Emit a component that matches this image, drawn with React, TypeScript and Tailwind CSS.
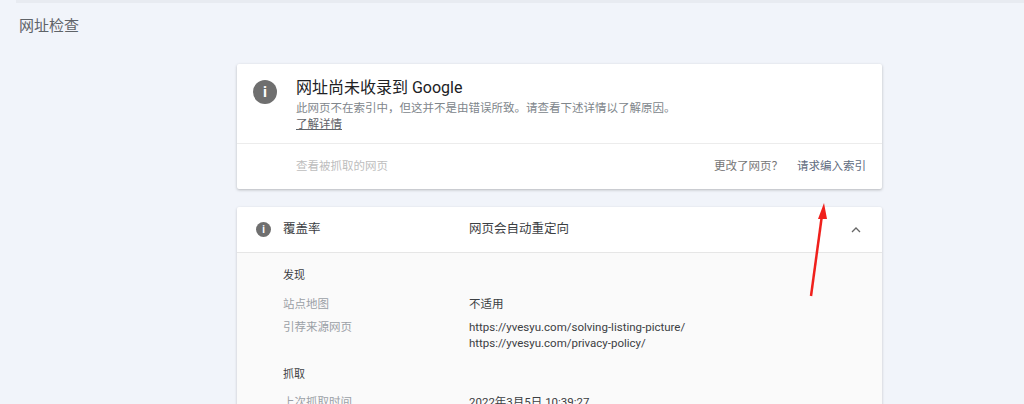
export default function App() {
  const f = { fontFamily: 'Roboto, "Noto Sans CJK SC", sans-serif' };
  return (
    <div style={f} className="relative w-[1024px] h-[404px] overflow-hidden bg-[#f1f4fa]">
      <div className="ml-4 h-[3px] bg-[#e8ebf1]" />
      <div className="pl-[19px] pt-[13px] text-[15px] text-[#5f6368] leading-[20px]">网址检查</div>
      <div className="ml-[237px] w-[645px] mt-[28px]">
        <div className="bg-white rounded-[2px] shadow-[0_1px_3px_rgba(0,0,0,0.25)]">
          <div className="flex pl-[16px] pt-[14px] h-[79px]">
            <div className="w-[24px] h-[24px] mt-[2px] rounded-full bg-[#6f6f6f] text-white flex items-center justify-center text-[15px] font-bold">i</div>
            <div className="ml-[19px]">
              <div className="text-[16px] text-[#202124] leading-[20px]">网址尚未收录到 Google</div>
              <div className="text-[11.5px] text-[#80868b] leading-[16px] mt-[2px]">此网页不在索引中，但这并不是由错误所致。请查看下述详情以了解原因。</div>
              <div className="text-[11.5px] text-[#5f6368] leading-[16px] underline">了解详情</div>
            </div>
          </div>
          <div className="border-t border-[#ececec] h-[46px] flex items-center pl-[59px] pr-[16px] text-[11.5px]">
            <span className="text-[#bdbdbd]">查看被抓取的网页</span>
            <span className="ml-auto text-[#757575]">更改了网页？</span>
            <span className="ml-[14px] text-[#5f6c80]">请求编入索引</span>
          </div>
        </div>
        <div className="mt-[18px] bg-white rounded-[2px] shadow-[0_1px_3px_rgba(0,0,0,0.2)]">
          <div className="flex items-center h-[45px] pl-[19px] pr-[20px] text-[12.5px] text-[#3c4043]">
            <div className="w-[15px] h-[15px] rounded-full bg-[#6f6f6f] text-white flex items-center justify-center text-[10px] font-bold">i</div>
            <span className="ml-[12px] w-[186px]">覆盖率</span>
            <span>网页会自动重定向</span>
            <svg className="ml-auto" width="12" height="12" viewBox="0 0 12 12"><path d="M2 8 L6 4 L10 8" fill="none" stroke="#666" strokeWidth="1.3" /></svg>
          </div>
          <div className="bg-[#fafafa] border-t border-[#e6e6e6] pl-[46px] pt-[15px] pb-[20px] text-[11.5px]">
            <div className="text-[#3c4043] text-[11px] leading-[16px]">发现</div>
            <div className="flex mt-[12px] leading-[16px]"><span className="w-[186px] text-[#9aa0a6]">站点地图</span><span className="text-[#3c4043]">不适用</span></div>
            <div className="flex mt-[7px] leading-[16px]"><span className="w-[186px] text-[#9aa0a6]">引荐来源网页</span><span className="text-[#3c4043]">https://yvesyu.com/solving-listing-picture/<br />https://yvesyu.com/privacy-policy/</span></div>
            <div className="text-[#3c4043] text-[11px] leading-[16px] mt-[16px]">抓取</div>
            <div className="flex mt-[11px] leading-[16px]"><span className="w-[186px] text-[#9aa0a6]">上次抓取时间</span><span className="text-[#3c4043]">2022年3月5日 10:39:27</span></div>
          </div>
        </div>
      </div>
      <svg className="absolute left-0 top-0" width="1024" height="404" style={{ pointerEvents: 'none' }}>
        <path d="M811 296 L822 215" stroke="#f0201c" strokeWidth="2.5" />
        <path d="M824 203 L818 219 L827 219 Z" fill="#f0201c" />
      </svg>
    </div>
  );
}
